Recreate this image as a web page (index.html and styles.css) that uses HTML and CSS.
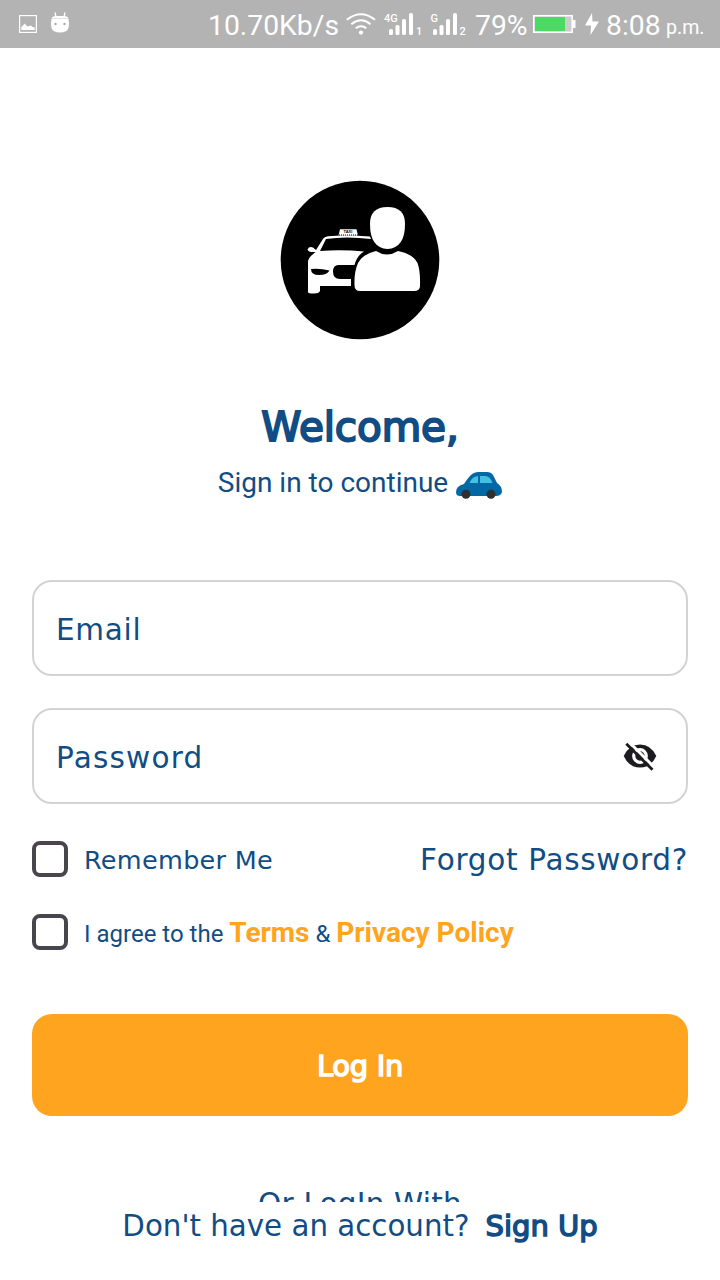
FILE: index.html
```html
<!DOCTYPE html>
<html lang="en">
<head>
<meta charset="utf-8">
<title>Log In</title>
<link rel="stylesheet" href="styles.css">
</head>
<body>
<div class="screen">
  <header class="status">
    <svg class="status-left" width="60" height="48" viewBox="16 0 60 48">
      <rect x="19.600" y="15.600" width="16.800" height="16.800" fill="none" stroke="#fff" stroke-width="1.200"/>
      <path d="M21.300 30V27L23 25.500L24.500 23.500L27.500 26.500L31 25.500L32.500 27L34.700 27.500V30Z" fill="#fff"/>
      <path d="M55 12.500L56 17M65 12.500L64 17" stroke="#fff" stroke-width="1.300"/>
      <path d="M51.500 19Q52 16 56 16H64Q68 16 68.500 19Q70 28 66.500 31Q60 34 53.500 31Q50 28 51.500 19Z" fill="#fff"/>
      <path d="M52 18.500H68" stroke="#e2e2e2" stroke-width="1"/>
      <circle cx="55.500" cy="24" r="1.200" fill="#aaa"/><circle cx="64.500" cy="24" r="1.200" fill="#aaa"/>
    </svg>
    <span class="speed">10.70Kb/s</span>
    <svg class="signals" width="126" height="48" viewBox="344 0 126 48" fill="#fff">
      <g fill="none" stroke="#fff" stroke-width="1.900">
        <path d="M346.800 19.800Q361 8.500 375 19.800M351.300 24.200Q361 16.500 370.500 24.200M355.700 28.300Q361 24 366.300 28.300"/>
      </g>
      <circle cx="361" cy="32.600" r="2.100"/>
      <text x="384" y="21.500" class="net">4G</text>
      <rect x="389" y="29" width="4" height="6" rx="1.500"/><rect x="395.500" y="25" width="4" height="10" rx="1.500"/><rect x="402" y="19" width="4" height="16" rx="1.500"/><rect x="409" y="13" width="4" height="22" rx="1.500"/>
      <text x="416" y="35" class="net">1</text>
      <text x="430.500" y="21.500" class="net">G</text>
      <rect x="433" y="29" width="4" height="6" rx="1.500"/><rect x="439.500" y="25" width="4" height="10" rx="1.500"/><rect x="446" y="19" width="4" height="16" rx="1.500"/><rect x="453" y="13" width="4" height="22" rx="1.500"/>
      <text x="459.500" y="35" class="net">2</text>
    </svg>
    <span class="percent">79%</span>
    <svg class="battery" width="70" height="48" viewBox="532 0 70 48">
      <rect x="533.700" y="15.700" width="38.500" height="16.600" fill="#ccc" stroke="#fff" stroke-width="1.500"/>
      <rect x="535" y="17" width="30" height="14" fill="#4cd964"/>
      <rect x="572.500" y="20" width="3" height="8" fill="#fff"/>
      <path d="M592 13L585 25.500H591L590.500 35L599 21.500H592.500Z" fill="#fff"/>
    </svg>
    <span class="clock">8:08</span><span class="meridiem">p.m.</span>
  </header>

  <main class="content">
    <svg class="logo" width="160" height="160" viewBox="280 180 160 160">
      <circle cx="360" cy="260" r="79.300" fill="#000"/>
      <g fill="#fff">
        <path d="M340 229.300H356.500L358 235.800H338.500Z"/>
        <path d="M308 292V262Q308 258.500 312 255L315.500 252Q308 252.500 307.500 249.500Q309 246 313 247.500L316 250L322 240.500Q324 236.500 328 236.200Q347 234.800 370 236.500L371 239Q346 236 326 239L320 251Q342 249.500 364 251.500Q357 255.500 354.500 265H340Q333 264 333 271.500Q333 279 340 279H351V286H320V291Q319 293.500 314 293.500Q308 293.500 308 292Z"/>
        <path d="M387.500 207Q405 207 405 224Q405 248 387.500 249Q370 248 370 224Q370 207 387.500 207Z"/>
        <path d="M376 251Q387 258 398 251Q413 254 417.500 263Q420.500 271 420 286Q420 291 414 291H360Q354.500 291 354.500 285Q354 272 358 263Q363 254 376 251Z"/>
      </g>
      <path d="M311 269Q320 268 329.500 270.500Q327 275 319 275Q311 275 311 269Z" fill="#000"/>
      <path d="M339 235H358" stroke="#000" stroke-width="1.200" stroke-dasharray="1 1"/>
      <text x="343.500" y="233.200" class="taxi">TAXI</text>
    </svg>

    <h1 class="title">Welcome,</h1>
    <div class="subtitle">
      <span class="subtitle-text">Sign in to continue</span>
      <svg width="46" height="28" viewBox="0 0 46 28">
        <path d="M0 20Q0 14 8 12Q13 4 17 1.500Q19 0 22 0H31Q35 0 37 3L41 11Q46 14 46 20Q45 24 40 24H4Q0 24 0 20Z" fill="#0268a3"/>
        <path d="M13.500 11Q16 4.500 22 4V11ZM24 4H29Q34 4 36.500 11H24Z" fill="#46bfe4"/>
        <circle cx="10" cy="22.300" r="4.500" fill="#303030"/><circle cx="35" cy="22.300" r="4.500" fill="#303030"/>
      </svg>
    </div>

    <div class="field"><span class="email">Email</span></div>
    <div class="field">
      <span class="password">Password</span>
      <svg class="eye" width="36" height="30" viewBox="622 741 36 30">
        <path d="M623.700 756Q629 744.500 640 744.500Q651 744.500 656.300 756Q651 767.500 640 767.500Q629 767.500 623.700 756Z" fill="#1c1b1f"/>
        <circle cx="640" cy="756" r="6.300" fill="none" stroke="#fff" stroke-width="3.200"/>
        <path d="M628.500 741.500L655 768" stroke="#fff" stroke-width="3"/>
        <path d="M626.300 743.700L652.500 769.800" stroke="#1c1b1f" stroke-width="2.800"/>
      </svg>
    </div>

    <div class="options">
      <span class="checkbox"></span><span class="remember">Remember Me</span>
      <span class="forgot">Forgot Password?</span>
    </div>
    <div class="agreement">
      <span class="checkbox"></span>
      <span class="agree">I agree to the <b class="terms">Terms</b> &amp; <b class="policy">Privacy Policy</b></span>
    </div>
    <div class="login"><span class="login-text">Log In</span></div>
    <div class="alternative">Or LogIn With</div>
  </main>
  <footer class="signup"><span class="question">Don't have an account?</span><span class="signup-link">Sign Up</span></footer>
</div>
</body>
</html>
```
FILE: styles.css
```css
* { box-sizing: border-box; }
body { margin: 0; background: #fff; }
.screen { width: 720px; height: 1280px; display: flex; flex-direction: column; overflow: hidden; font-family: "DejaVu Sans", sans-serif; color: #114d84; white-space: nowrap; }
.status { height: 48px; flex: none; display: flex; align-items: center; background: #b3b3b3; color: #fff; font: 28.3px/48px Roboto, sans-serif; }
.status svg { flex: none; }
.status span { flex: none; padding-top: 2px; height: 48px; }
.status-left { margin-left: 16px; }
.speed { width: 136px; margin-left: 132px; }
.percent { width: 57px; margin-left: 5px; }
.clock { width: 57px; margin-left: 4px; }
.status .meridiem { margin-left: 3px; padding-top: 4px; font-size: 19.6px; }
.net { font: 500 11px Roboto, sans-serif; }
.taxi { font: bold 4px "Liberation Sans", sans-serif; fill: #000; }
.content { height: 1154px; flex: none; padding: 132px 32px 0; display: flex; flex-direction: column; overflow: hidden; }
.logo { align-self: center; flex: none; }
.title { margin: 58px 0 0; height: 56px; flex: none; text-align: center; font: 400 40.5px/58px "DejaVu Sans", sans-serif; letter-spacing: -.1px; -webkit-text-stroke: 2px #114d84; }
.subtitle { height: 42px; margin-top: 8px; flex: none; display: flex; justify-content: center; align-items: center; gap: 8px; font: 28px/42px Roboto, sans-serif; }
.subtitle svg { margin-top: 5px; }
.field { height: 96px; flex: none; border: 2px solid #d3d3d3; border-radius: 20px; display: flex; align-items: center; justify-content: space-between; padding: 3px 28px 0 22px; font-size: 29.5px; letter-spacing: .7px; }
.password { letter-spacing: 1.2px; }
.eye { margin-top: -3px; }
.subtitle + .field { margin-top: 76px; }
.field + .field { margin-top: 32px; }
.options { height: 36px; margin-top: 37px; flex: none; display: flex; align-items: center; }
.checkbox { width: 36px; height: 36px; flex: none; border: 4px solid #49454f; border-radius: 8px; margin-right: 16px; }
.remember { padding-top: 1px; font-size: 25.5px; letter-spacing: .3px; }
.forgot { margin-left: auto; padding-top: 2px; font-size: 29.5px; letter-spacing: .7px; }
.agreement { height: 36px; margin-top: 37px; flex: none; display: flex; align-items: center; font: 24px/36px Roboto, sans-serif; }
.agree { padding-top: 2px; }
.agree b { font-size: 28px; color: #ffa41e; }
.login { height: 102px; margin-top: 64px; flex: none; border-radius: 20px; background: #ffa41e; color: #fff; display: flex; align-items: center; justify-content: center; padding-top: 1px; font-size: 29px; letter-spacing: -.3px; -webkit-text-stroke: 1.5px #fff; }
.alternative { height: 40px; margin-top: 68px; flex: none; text-align: center; font-size: 29.5px; line-height: 40px; letter-spacing: .2px; }
.signup { height: 78px; padding-top: 4px; display: flex; justify-content: center; gap: 16px; font-size: 29.3px; line-height: 40px; background: #fff; }
.signup-link { font-size: 29px; -webkit-text-stroke: 1.5px #114d84; }
```
